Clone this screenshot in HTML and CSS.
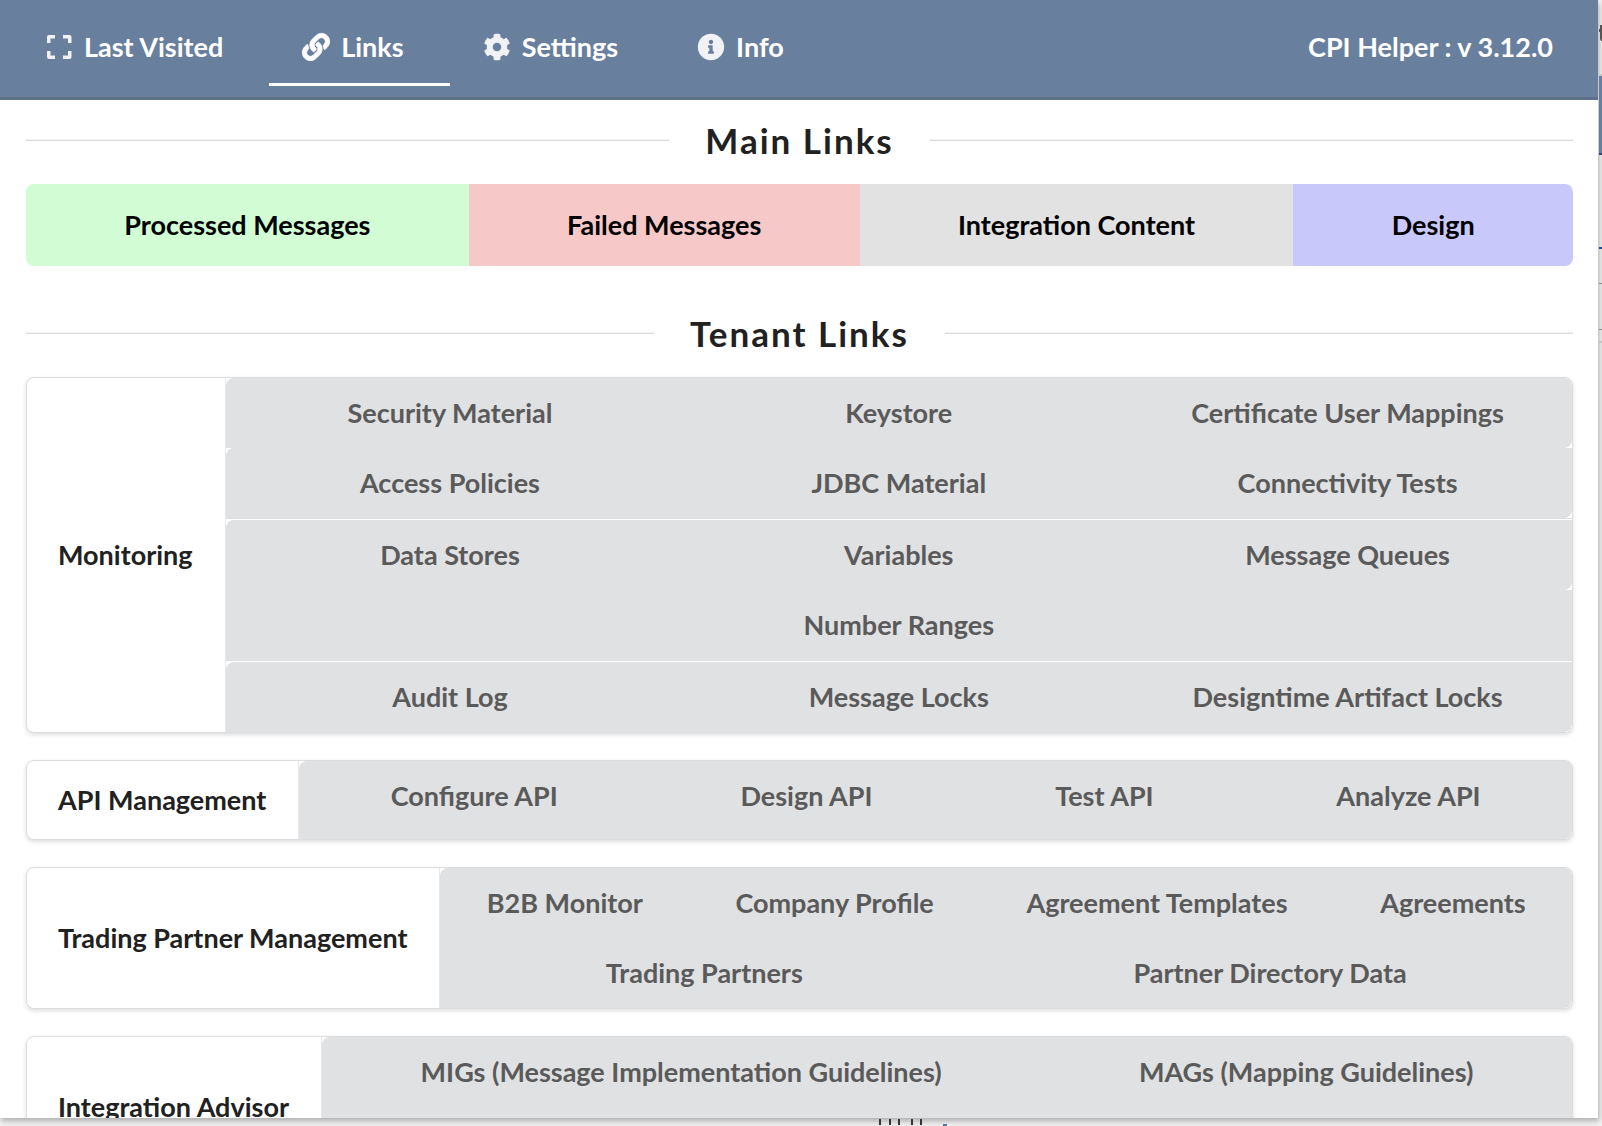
FILE: index.html
```html
<!DOCTYPE html>
<html lang="en">
<head>
<meta charset="utf-8">
<title>CPI Helper</title>
<link rel="stylesheet" href="styles.css">
</head>
<body>
<div class="screen">
  <main class="modal">
    <nav class="menu">
      <a class="menu-item" href="#visited">
        <svg class="icon icon-dim" viewBox="0 0 30 30" aria-hidden="true"><path fill="currentColor" d="M3 5a2 2 0 0 1 2-2h6v3.500H6.500V11H3zM19 3h6.500a2 2 0 0 1 2 2v6H24V6.500h-5zM3 19h3.500v4.500H11V27H5a2 2 0 0 1-2-2zM24 19h3.500v6a2 2 0 0 1-2 2H19v-3.500h5z"/></svg>
        <span>Last Visited</span>
      </a>
      <a class="menu-item menu-item-active" href="#links" aria-current="page">
        <svg class="icon" viewBox="-26 -26 564 564" aria-hidden="true"><path fill="currentColor" stroke="currentColor" stroke-width="16" d="M326.612 185.391c59.747 59.809 58.927 155.698.36 214.590-.11.120-.240.250-.360.370l-67.200 67.200c-59.270 59.270-155.699 59.262-214.960 0-59.270-59.260-59.270-155.700 0-214.960l37.106-37.106c9.840-9.840 26.786-3.300 27.294 10.606.648 17.722 3.826 35.527 9.690 52.721 1.986 5.822.567 12.262-3.783 16.612l-13.087 13.087c-28.026 28.026-28.905 73.660-1.155 101.960 28.024 28.579 74.086 28.749 102.325.510l67.200-67.190c28.191-28.191 28.073-73.757 0-101.830-3.701-3.694-7.429-6.564-10.341-8.569a16.037 16.037 0 0 1-6.947-12.606c-.396-10.567 3.348-21.456 11.698-29.806l21.054-21.055c5.521-5.521 14.182-6.199 20.584-1.731a152.482 152.482 0 0 1 20.522 17.197zM467.547 44.449c-59.261-59.262-155.690-59.270-214.960 0l-67.200 67.200c-.120.120-.250.250-.360.370-58.566 58.892-59.387 154.781.360 214.590a152.454 152.454 0 0 0 20.521 17.196c6.402 4.468 15.064 3.789 20.584-1.731l21.054-21.055c8.350-8.350 12.094-19.239 11.698-29.806a16.037 16.037 0 0 0-6.947-12.606c-2.912-2.005-6.640-4.875-10.341-8.569-28.073-28.073-28.191-73.639 0-101.830l67.200-67.190c28.239-28.239 74.300-28.069 102.325.510 27.750 28.300 26.872 73.934-1.155 101.960l-13.087 13.087c-4.350 4.350-5.769 10.790-3.783 16.612 5.864 17.194 9.042 34.999 9.690 52.721.509 13.906 17.454 20.446 27.294 10.606l37.106-37.106c59.271-59.259 59.271-155.699.001-214.959z"/></svg>
        <span>Links</span>
      </a>
      <a class="menu-item" href="#settings">
        <svg class="icon icon-dim" viewBox="-26 -26 564 564" aria-hidden="true"><path fill="currentColor" d="M487.400 315.700l-42.600-24.600c4.300-23.200 4.300-47 0-70.200l42.600-24.600c4.900-2.800 7.100-8.600 5.500-14-11.100-35.600-30-67.800-54.700-94.600-3.800-4.100-10-5.100-14.800-2.300L380.800 110c-17.900-15.400-38.500-27.300-60.800-35.100V25.800c0-5.600-3.900-10.500-9.400-11.700-36.700-8.200-74.300-7.800-109.200 0-5.500 1.200-9.400 6.100-9.400 11.700V75c-22.200 7.900-42.800 19.800-60.800 35.100L88.700 85.500c-4.900-2.800-11-1.900-14.800 2.300-24.700 26.700-43.600 58.900-54.700 94.600-1.700 5.400.6 11.200 5.500 14L67.300 221c-4.300 23.200-4.300 47 0 70.200l-42.600 24.600c-4.900 2.800-7.100 8.600-5.500 14 11.100 35.600 30 67.800 54.700 94.600 3.800 4.100 10 5.100 14.800 2.300l42.600-24.600c17.900 15.400 38.500 27.300 60.800 35.100v49.200c0 5.600 3.900 10.500 9.400 11.700 36.700 8.200 74.300 7.800 109.200 0 5.500-1.200 9.400-6.100 9.400-11.700v-49.200c22.200-7.900 42.800-19.800 60.800-35.100l42.600 24.600c4.900 2.800 11 1.900 14.800-2.300 24.700-26.700 43.600-58.900 54.700-94.600 1.500-5.500-.7-11.300-5.600-14.100zM256 336c-44.100 0-80-35.900-80-80s35.900-80 80-80 80 35.900 80 80-35.900 80-80 80z"/></svg>
        <span>Settings</span>
      </a>
      <a class="menu-item" href="#info">
        <svg class="icon icon-dim" viewBox="-26 -26 564 564" aria-hidden="true"><path fill="currentColor" d="M256 8C119.043 8 8 119.083 8 256c0 136.997 111.043 248 248 248s248-111.003 248-248C504 119.083 392.957 8 256 8zm0 110c23.196 0 42 18.804 42 42s-18.804 42-42 42-42-18.804-42-42 18.804-42 42-42zm56 254c0 6.627-5.373 12-12 12h-88c-6.627 0-12-5.373-12-12v-24c0-6.627 5.373-12 12-12h12v-64h-12c-6.627 0-12-5.373-12-12v-24c0-6.627 5.373-12 12-12h64c6.627 0 12 5.373 12 12v100h12c6.627 0 12 5.373 12 12v24z"/></svg>
        <span>Info</span>
      </a>
      <span class="version">CPI Helper : v 3.12.0</span>
    </nav>

    <div class="content">
      <h2 class="divider">Main Links</h2>
      <div class="main-links">
        <button class="main-button green" type="button">Processed Messages</button>
        <button class="main-button red" type="button">Failed Messages</button>
        <button class="main-button grey" type="button">Integration Content</button>
        <button class="main-button blue" type="button">Design</button>
      </div>

      <h2 class="divider">Tenant Links</h2>
      <div class="cards">
        <section class="card">
          <h3 class="label">Monitoring</h3>
          <div class="groups">
            <div class="group equal">
              <div class="row cut"><button class="link" type="button">Security Material</button><button class="link" type="button">Keystore</button><button class="link" type="button">Certificate User Mappings</button></div>
              <div class="row cut"><button class="link" type="button">Access Policies</button><button class="link" type="button">JDBC Material</button><button class="link" type="button">Connectivity Tests</button></div>
            </div>
            <div class="group equal">
              <div class="row cut"><button class="link" type="button">Data Stores</button><button class="link" type="button">Variables</button><button class="link" type="button">Message Queues</button></div>
              <div class="row"><button class="link" type="button">Number Ranges</button></div>
            </div>
            <div class="group equal">
              <div class="row cut"><button class="link" type="button">Audit Log</button><button class="link" type="button">Message Locks</button><button class="link" type="button">Designtime Artifact Locks</button></div>
            </div>
          </div>
        </section>

        <section class="card">
          <h3 class="label">API Management</h3>
          <div class="row cut"><button class="link" type="button">Configure API</button><button class="link" type="button">Design API</button><button class="link" type="button">Test API</button><button class="link" type="button">Analyze API</button></div>
        </section>

        <section class="card">
          <h3 class="label">Trading Partner Management</h3>
          <div class="row cut"><button class="link" type="button">B2B Monitor</button><button class="link" type="button">Company Profile</button><button class="link" type="button">Agreement Templates</button><button class="link" type="button">Agreements</button><button class="link" type="button">Trading Partners</button><button class="link" type="button">Partner Directory Data</button></div>
        </section>

        <section class="card card-tall">
          <h3 class="label">Integration Advisor</h3>
          <div class="row cut"><button class="link" type="button">MIGs (Message Implementation Guidelines)</button><button class="link" type="button">MAGs (Mapping Guidelines)</button></div>
        </section>
      </div>
    </div>
  </main>

  <svg class="behind-right" viewBox="0 0 4 350" aria-hidden="true">
    <path fill="#555" d="M1 29h3v3H1zM2 25h2v16H3l-1-2z"/>
    <path fill="#c8c8c8" d="M1 74h3v2H1z"/>
    <path fill="#687f9f" d="M1 76h3v78H1z"/>
    <path fill="#35496b" d="M1 153h3v2H1z"/>
    <path fill="#1d5196" d="M1 247h3v2H1z"/>
    <path fill="#8a8a8a" d="M1 283h3v1H1zM1 329h3v1H1z"/>
    <path fill="#c4c4c4" d="M1 341h3v2H1z"/>
  </svg>
  <svg class="behind-bottom" viewBox="0 0 70 8" aria-hidden="true">
    <path fill="#333" d="M0 1h2v6H0zM10 1h2v6h-2zM19 1h2v6h-2zM32 1h2v6h-2zM41 1h2v6h-2z"/>
    <path fill="#4a7bb0" d="M64 6h4v2h-4z"/>
  </svg>
</div>
</body>
</html>
```
FILE: styles.css
```css
*, *::before, *::after { box-sizing: border-box; }

body {
  margin: 0;
  font-family: Lato, "Liberation Sans", sans-serif;
  font-size: 27px;
  line-height: 40px;
  font-weight: 700;
  color: #212121;
  background: #f3f3f3;
}

.screen {
  position: relative;
  height: 100vh;
  overflow: hidden;
  padding: 0 4px 8px 0;
}

.modal {
  height: 100%;
  overflow: hidden;
  background: #fff;
  box-shadow: 1px 3px 6px rgba(34, 36, 38, .35);
  position: relative;
}

.menu {
  display: flex;
  align-items: flex-start;
  height: 100px;
  padding: 0 0 0 12px;
  background: #697f9e;
  border-bottom: 3px solid #5f7189;
}

.menu-item {
  display: flex;
  align-items: center;
  gap: 10px;
  height: 86px;
  padding: 10px 46px 0 32px;
  border-bottom: 3px solid transparent;
  color: #fff;
  text-decoration: none;
}

.menu-item-active { border-bottom-color: #fff; }

.icon { width: 30px; height: 30px; flex: none; }
.icon-dim { opacity: .9; }

.version {
  margin-left: auto;
  padding: 27px 45px 0 0;
  color: #fff;
}

.content { padding: 0 25px 0 26px; }

.divider {
  display: flex;
  align-items: center;
  gap: 36px;
  height: 80px;
  margin: 0 0 4px;
  font-size: 35px;
  letter-spacing: 2px;
}

.divider::before,
.divider::after {
  content: "";
  flex: 1;
  height: 2px;
  background: linear-gradient(#f0f0f0 50%, #dcdcdc 50%);
}

.main-links {
  display: flex;
  height: 82px;
  margin-bottom: 27px;
  border-radius: 8px;
  overflow: hidden;
}

button {
  border: 0;
  padding: 0;
  font: inherit;
  color: inherit;
  cursor: pointer;
}

.main-button { flex: 1 1 auto; color: #000; }
.green { background: #d2fdd4; }
.red { background: #f6c8c8; }
.grey { background: #e2e2e2; }
.blue { background: #c8c8fb; }

.cards {
  display: flex;
  flex-direction: column;
  gap: 27px;
}

.card {
  display: flex;
  min-height: 80px;
  border: 1px solid #dcddde;
  border-radius: 8px;
  background: #fff;
  box-shadow: 0 2px 4px rgba(34, 36, 38, .15);
  overflow: hidden;
}

.card-tall { min-height: 142px; }

.label {
  display: flex;
  align-items: center;
  flex: none;
  margin: 0;
  padding: 0 32px 0 31px;
  border-right: 1px solid #e8e8e8;
  font-size: 27px;
}

.groups {
  flex: 1;
  display: flex;
  flex-direction: column;
  gap: 1px;
}

.group { background: #fff; }
.group:not(:last-child) { border-bottom: 1px solid #dcddde; }

.row {
  flex: 1;
  display: flex;
  flex-wrap: wrap;
  align-content: flex-start;
  background: #e0e1e2;
}

.cut { border-radius: 8px 0 8px 0; }

.link {
  flex: 1 1 auto;
  height: 70px;
  padding: 0 42px;
  background: transparent;
  color: #5a5a5a;
}

.equal .link { flex-basis: 0; padding: 0; }

.behind-right {
  position: absolute;
  top: 0;
  right: 0;
  width: 4px;
  height: 350px;
}

.behind-bottom {
  position: absolute;
  bottom: 0;
  left: calc(55% - 2px);
  width: 70px;
  height: 8px;
}
```
